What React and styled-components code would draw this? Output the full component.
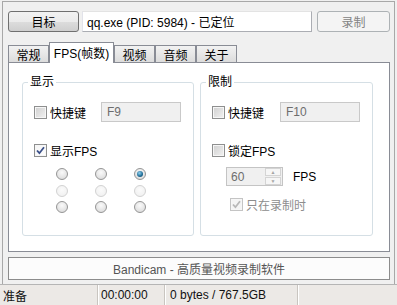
import React from "react";
import styled, { createGlobalStyle, css } from "styled-components";

const GlobalStyle = createGlobalStyle`
  html, body { margin: 0; padding: 0; background: #f0f0f0; }
  body {
    font-family: "Liberation Sans", "Noto Sans CJK SC", sans-serif;
    font-size: 12px;
    color: #000;
  }
  * { box-sizing: border-box; }
`;

const Window = styled.div`
  width: 397px;
  height: 305px;
  display: flex;
  flex-direction: column;
  background: #f0f0f0;
  overflow: hidden;
`;

const Frame = styled.div`
  margin: 1px 2px 0 2px;
  height: 284px;
  border: 1px solid #a8a8a8;
  border-bottom: none;
  padding: 9px 4px 0 5px;
  display: flex;
  flex-direction: column;
`;

const TopRow = styled.div`
  display: flex;
  align-items: center;
  height: 21px;
`;

const Button = styled.div`
  width: ${(p) => p.$w}px;
  height: 21px;
  display: flex;
  align-items: center;
  justify-content: center;
  border-radius: 3px;
  font-size: 12px;
  ${(p) =>
    p.$disabled
      ? css`
          border: 1px solid #adb2b5;
          background: #f4f4f4;
          color: #838383;
        `
      : css`
          border: 1px solid #707070;
          background: linear-gradient(#f2f2f2 0%, #ebebeb 50%, #dddddd 51%, #cfcfcf 100%);
          color: #000;
        `}
`;

const TargetField = styled.div`
  flex: 1;
  height: 21px;
  margin: 0 5px 0 3px;
  border: 1px solid #abadb3;
  border-top-color: #e3e3e3;
  border-left-color: #e2e3ea;
  background: #fff;
  display: flex;
  align-items: center;
  padding-left: 4px;
  white-space: nowrap;
`;

const TabBar = styled.div`
  margin-top: 10px;
  height: 20px;
  display: flex;
  align-items: flex-end;
`;

const Tab = styled.div`
  width: ${(p) => p.$w}px;
  display: flex;
  align-items: center;
  justify-content: center;
  border: 1px solid #898c95;
  border-bottom: none;
  ${(p) =>
    p.$active
      ? css`
          height: 21px;
          margin-bottom: -1px;
          background: #fff;
          position: relative;
          z-index: 1;
          padding-bottom: 2px;
        `
      : css`
          height: 17px;
          background: linear-gradient(#f2f2f2, #dcdcdc);
          padding-top: 1px;
        `}
`;

const Panel = styled.div`
  height: 190px;
  border: 1px solid #898c95;
  background: #fff;
  padding: 12px 0 0 13px;
  display: flex;
  gap: 6px;
`;

const Group = styled.fieldset`
  width: ${(p) => p.$w}px;
  height: 161px;
  margin: 0;
  padding: 0;
  min-width: 0;
  border: 1px solid #d5dfe5;
  border-radius: 3px;
`;

const Legend = styled.legend`
  margin-left: 5px;
  padding: 0 2px;
  line-height: 14px;
  font-size: 12px;
`;

const GroupBody = styled.div`
  padding: 0 12px 0 11px;
`;

const Row = styled.div`
  display: flex;
  align-items: center;
  height: ${(p) => p.$h || 16}px;
  margin-top: ${(p) => p.$mt || 0}px;
  padding-left: ${(p) => p.$pl || 0}px;
`;

const CheckLabel = styled.div`
  display: inline-flex;
  align-items: center;
  gap: 3px;
  color: ${(p) => (p.$disabled ? "#8d8d8d" : "#000")};
  white-space: nowrap;
`;

const Box = styled.span`
  width: 13px;
  height: 13px;
  display: inline-flex;
  align-items: center;
  justify-content: center;
  border: 1px solid ${(p) => (p.$disabled ? "#c4c4c4" : "#8e8f8f")};
  box-shadow: inset 0 0 0 1px #f6f6f6;
  background: ${(p) =>
    p.$checked
      ? "linear-gradient(135deg, #f4f4f4, #ffffff)"
      : "linear-gradient(135deg, #cfcfcf, #f2f2f2)"};
  ${(p) =>
    p.$disabled &&
    css`
      background: #f4f4f4;
    `}
`;

const KeyField = styled.div`
  margin-left: auto;
  width: 80px;
  height: 20px;
  border: 1px solid #c9c9c9;
  background: #f0f0f0;
  color: #6d6d6d;
  display: flex;
  align-items: center;
  padding-left: 5px;
`;

const RadioGrid = styled.div`
  margin: 8px 0 0 19px;
  display: grid;
  grid-template-columns: repeat(3, 39px);
  grid-auto-rows: 16.5px;
  align-items: center;
  justify-items: center;
`;

const Radio = styled.span`
  width: 12px;
  height: 12px;
  border-radius: 50%;
  display: inline-flex;
  align-items: center;
  justify-content: center;
  border: 1px solid ${(p) => (p.$disabled ? "#d2d2d2" : "#959595")};
  background: ${(p) =>
    p.$disabled
      ? "radial-gradient(circle at 50% 40%, #fbfbfb, #eeeeee)"
      : "radial-gradient(circle at 50% 35%, #fafafa, #d6d6d6)"};
`;

const Dot = styled.span`
  width: 6px;
  height: 6px;
  border-radius: 50%;
  background: radial-gradient(circle at 40% 35%, #8fd0f0, #1d6a93 60%, #12405e);
`;

const Spin = styled.div`
  width: 57px;
  height: 19px;
  border: 1px solid #c4c4c4;
  background: #f0f0f0;
  color: #6d6d6d;
  display: flex;
  align-items: center;
`;

const SpinText = styled.span`
  flex: 1;
  padding-left: 4px;
`;

const SpinButtons = styled.div`
  width: 16px;
  height: 17px;
  display: flex;
  flex-direction: column;
  gap: 1px;
  margin-right: 1px;
`;

const SpinButton = styled.div`
  flex: 1;
  border: 1px solid #d4d4d4;
  background: #f6f6f6;
  display: flex;
  align-items: center;
  justify-content: center;
  color: #a5a5a5;
  font-size: 5px;
  line-height: 1;
`;

const FpsUnit = styled.span`
  margin-left: 10px;
`;

const InfoBar = styled.div`
  margin-top: 5px;
  height: 23px;
  border: 1px solid #8c8c8c;
  background: #fcfcfc;
  color: #555;
  display: flex;
  align-items: center;
  justify-content: center;
`;

const StatusBar = styled.div`
  height: 21px;
  border-top: 1px solid #b5b5b5;
  background: #ece9e6;
  display: flex;
  align-items: center;
`;

const StatusCell = styled.div`
  width: ${(p) => p.$w}px;
  height: 100%;
  display: flex;
  align-items: center;
  padding-left: ${(p) => p.$pl}px;
  color: #111;
  white-space: nowrap;
  ${(p) =>
    p.$sep &&
    css`
      border-right: 1px solid #c9c5c0;
      box-shadow: 1px 0 0 #fff;
    `}
`;

const Check = ({ color }) => (
  <svg width="9" height="9" viewBox="0 0 9 9">
    <path d="M1 4.5 L3.4 7.2 L8 1.2" fill="none" stroke={color} strokeWidth="1.8" />
  </svg>
);

const Checkbox = ({ checked, disabled, children }) => (
  <CheckLabel $disabled={disabled}>
    <Box $checked={checked} $disabled={disabled}>
      {checked && <Check color={disabled ? "#b8b8b8" : "#3a4f88"} />}
    </Box>
    {children}
  </CheckLabel>
);

const radios = [
  [false, false, true],
  [false, false, false],
  [false, false, false],
];

const tabs = [
  { label: "常规", w: 41 },
  { label: "FPS(帧数)", w: 65, active: true },
  { label: "视频", w: 41 },
  { label: "音频", w: 41 },
  { label: "关于", w: 41 },
];

export default function App() {
  return (
    <Window>
      <GlobalStyle />
      <Frame>
        <TopRow>
          <Button $w={71}>目标</Button>
          <TargetField>qq.exe (PID: 5984) - 已定位</TargetField>
          <Button $w={73} $disabled>
            录制
          </Button>
        </TopRow>

        <TabBar>
          {tabs.map((t) => (
            <Tab key={t.label} $w={t.w} $active={t.active}>
              {t.label}
            </Tab>
          ))}
        </TabBar>

        <Panel>
          <Group $w={172}>
            <Legend>显示</Legend>
            <GroupBody>
              <Row $h={20} $mt={13}>
                <Checkbox>快捷键</Checkbox>
                <KeyField>F9</KeyField>
              </Row>
              <Row $mt={20}>
                <Checkbox checked>显示FPS</Checkbox>
              </Row>
            </GroupBody>
            <RadioGrid>
              {radios.map((row, r) =>
                row.map((on, c) => (
                  <Radio key={`${r}-${c}`} $disabled={r === 1}>
                    {on && <Dot />}
                  </Radio>
                ))
              )}
            </RadioGrid>
          </Group>

          <Group $w={173}>
            <Legend>限制</Legend>
            <GroupBody>
              <Row $h={20} $mt={13}>
                <Checkbox>快捷键</Checkbox>
                <KeyField>F10</KeyField>
              </Row>
              <Row $mt={20}>
                <Checkbox>锁定FPS</Checkbox>
              </Row>
              <Row $h={19} $mt={9} $pl={14}>
                <Spin>
                  <SpinText>60</SpinText>
                  <SpinButtons>
                    <SpinButton>▲</SpinButton>
                    <SpinButton>▼</SpinButton>
                  </SpinButtons>
                </Spin>
                <FpsUnit>FPS</FpsUnit>
              </Row>
              <Row $mt={10} $pl={18}>
                <Checkbox checked disabled>
                  只在录制时
                </Checkbox>
              </Row>
            </GroupBody>
          </Group>
        </Panel>

        <InfoBar>Bandicam - 高质量视频录制软件</InfoBar>
      </Frame>

      <StatusBar>
        <StatusCell $w={98} $pl={3} $sep>
          准备
        </StatusCell>
        <StatusCell $w={67} $pl={3} $sep>
          00:00:00
        </StatusCell>
        <StatusCell $w={133} $pl={5} $sep>
          0 bytes / 767.5GB
        </StatusCell>
        <StatusCell $w={99} $pl={3} />
      </StatusBar>
    </Window>
  );
}
